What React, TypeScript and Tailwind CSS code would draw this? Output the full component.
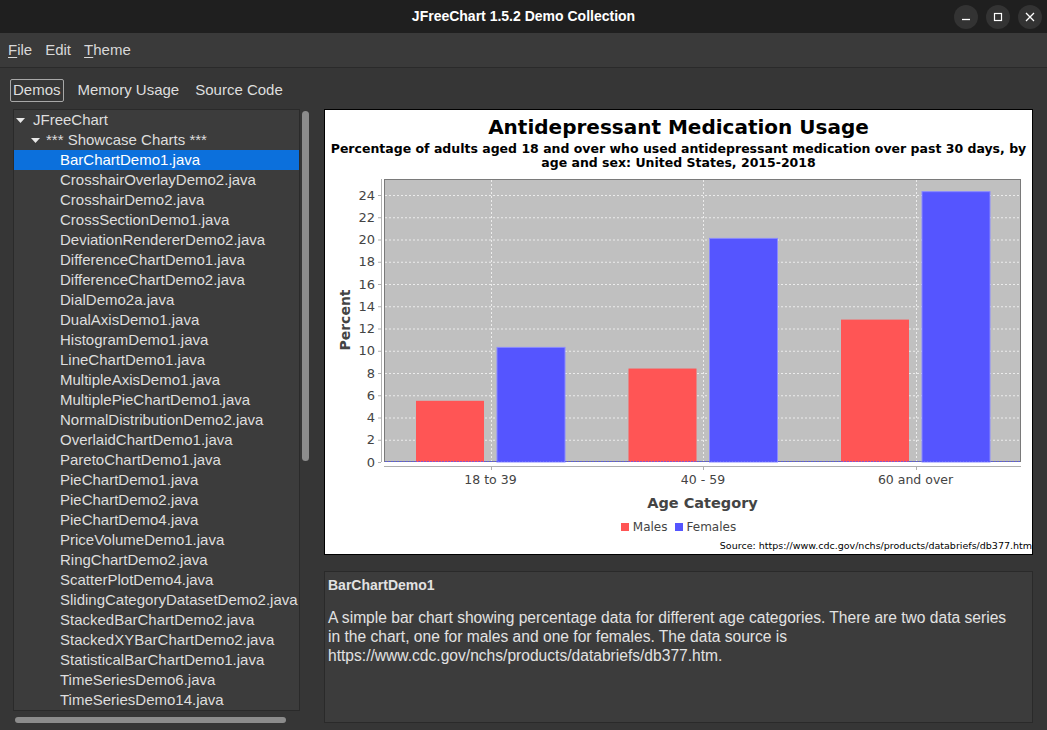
import React from 'react';

const demos = [
  'BarChartDemo1.java',
  'CrosshairOverlayDemo2.java',
  'CrosshairDemo2.java',
  'CrossSectionDemo1.java',
  'DeviationRendererDemo2.java',
  'DifferenceChartDemo1.java',
  'DifferenceChartDemo2.java',
  'DialDemo2a.java',
  'DualAxisDemo1.java',
  'HistogramDemo1.java',
  'LineChartDemo1.java',
  'MultipleAxisDemo1.java',
  'MultiplePieChartDemo1.java',
  'NormalDistributionDemo2.java',
  'OverlaidChartDemo1.java',
  'ParetoChartDemo1.java',
  'PieChartDemo1.java',
  'PieChartDemo2.java',
  'PieChartDemo4.java',
  'PriceVolumeDemo1.java',
  'RingChartDemo2.java',
  'ScatterPlotDemo4.java',
  'SlidingCategoryDatasetDemo2.java',
  'StackedBarChartDemo2.java',
  'StackedXYBarChartDemo2.java',
  'StatisticalBarChartDemo1.java',
  'TimeSeriesDemo6.java',
  'TimeSeriesDemo14.java',
];

const data = [
  { label: '18 to 39', c: 490.5, males: 5.5, females: 10.3 },
  { label: '40 - 59', c: 703, males: 8.4, females: 20.1 },
  { label: '60 and over', c: 915.5, males: 12.8, females: 24.3 },
];

const yOf = (v: number) => 463 - v * 11.125;
const ticks = [0, 2, 4, 6, 8, 10, 12, 14, 16, 18, 20, 22, 24];

function Caret() {
  return (
    <svg width="9" height="5" viewBox="0 0 9 5" className="shrink-0">
      <path d="M0 0 L9 0 L4.5 5 Z" fill="#e8e8e8" />
    </svg>
  );
}

// plot coordinates are page pixels, the viewBox maps them into place
function BarChart() {
  return (
    <svg
      width="707"
      height="345"
      viewBox="325 171 707 345"
      className="block"
      style={{ fontFamily: '"DejaVu Sans", sans-serif' }}
    >
      <rect x="384.5" y="180.5" width="636" height="282" fill="#c0c0c0" stroke="#7a7a7a" />
      {ticks.slice(1).map((t) => (
        <line key={t} x1="385" x2="1020" y1={yOf(t) + 0.5} y2={yOf(t) + 0.5} stroke="#ececec" strokeDasharray="2 2" />
      ))}
      {data.map((d) => (
        <line key={d.label} x1={Math.round(d.c) + 0.5} x2={Math.round(d.c) + 0.5} y1="181" y2="462" stroke="#ececec" strokeDasharray="2 2" />
      ))}
      {data.map((d) => (
        <g key={'b' + d.label}>
          <rect x={d.c - 74.5} y={yOf(d.males)} width="68" height={463 - yOf(d.males)} fill="#ff5555" />
          <rect x={d.c + 6.5} y={yOf(d.females)} width="68" height={463 - yOf(d.females)} fill="#5555ff" stroke="#8a8aff" strokeWidth="1" />
        </g>
      ))}
      <line x1="385" x2="1020" y1="462.5" y2="462.5" stroke="#5555ff" strokeDasharray="2 1" opacity="0.7" />

      {/* value axis */}
      <line x1="381.5" x2="381.5" y1="180" y2="463" stroke="#b0b0b0" />
      {ticks.map((t) => (
        <g key={'t' + t}>
          <line x1="378" x2="381" y1={yOf(t) + 0.5} y2={yOf(t) + 0.5} stroke="#b0b0b0" />
          <text x="375" y={yOf(t) + 4.5} textAnchor="end" fontSize="13" fill="#444">
            {t}
          </text>
        </g>
      ))}
      <text
        x="0"
        y="0"
        transform="translate(350 321) rotate(-90)"
        textAnchor="middle"
        fontSize="14"
        fontWeight="bold"
        fill="#444"
      >
        Percent
      </text>

      {/* category axis */}
      <line x1="384" x2="1021" y1="467.5" y2="467.5" stroke="#b0b0b0" />
      {data.map((d) => (
        <g key={'c' + d.label}>
          <line x1={Math.round(d.c) + 0.5} x2={Math.round(d.c) + 0.5} y1="467" y2="471" stroke="#b0b0b0" />
          <text x={d.c} y="484.5" textAnchor="middle" fontSize="12.5" fill="#444">
            {d.label}
          </text>
        </g>
      ))}
      <text x="702.5" y="509" textAnchor="middle" fontSize="14.5" fontWeight="bold" fill="#444">
        Age Category
      </text>
    </svg>
  );
}

export default function App() {
  return (
    <div className="w-[1047px] h-[730px] flex flex-col bg-[#363636] overflow-hidden font-['Liberation_Sans',sans-serif] text-[#dedede]">
      {/* window title bar */}
      <div className="h-[33px] shrink-0 bg-[#1f1f1f] grid grid-cols-[1fr_auto_1fr] items-center">
        <div />
        <div className="text-[14px] font-bold text-white">JFreeChart 1.5.2 Demo Collection</div>
        <div className="flex justify-end gap-[8px] pr-[5px]">
          <div className="w-[24px] h-[24px] rounded-full bg-[#333] flex items-center justify-center">
            <svg width="10" height="10" viewBox="0 0 10 10">
              <line x1="1" x2="9" y1="7.5" y2="7.5" stroke="#fff" strokeWidth="1.3" />
            </svg>
          </div>
          <div className="w-[24px] h-[24px] rounded-full bg-[#333] flex items-center justify-center">
            <svg width="10" height="10" viewBox="0 0 10 10">
              <rect x="1.5" y="1.5" width="7" height="7" fill="none" stroke="#fff" strokeWidth="1.2" />
            </svg>
          </div>
          <div className="w-[24px] h-[24px] rounded-full bg-[#333] flex items-center justify-center">
            <svg width="10" height="10" viewBox="0 0 10 10">
              <path d="M1 1 L9 9 M9 1 L1 9" stroke="#fff" strokeWidth="1.3" />
            </svg>
          </div>
        </div>
      </div>

      {/* menu bar */}
      <div className="h-[35px] shrink-0 bg-[#3a3a3a] border-b border-[#2a2a2a] flex items-center gap-[13px] px-[8px] text-[15px] text-[#d8d8d8]">
        <span>
          <span className="underline underline-offset-2">F</span>ile
        </span>
        <span>Edit</span>
        <span>
          <span className="underline underline-offset-2">T</span>heme
        </span>
      </div>

      {/* tabbed pane */}
      <div className="flex-1 flex flex-col pt-[11px]">
        <div className="h-[23px] flex items-center pl-[10px] text-[15px] text-[#dedede]">
          <div className="h-[23px] border border-[#a8a8a8] rounded-[2px] px-[2px] flex items-center">Demos</div>
          <div className="ml-[14px]">Memory Usage</div>
          <div className="ml-[16px]">Source Code</div>
        </div>

        <div className="flex pt-[7px] pl-[13px]">
          {/* left: demo tree */}
          <div className="flex flex-col w-[297px]">
            <div className="flex">
              <div className="w-[287px] h-[602px] border border-[#2a2a2a] bg-[#3c3c3c] overflow-hidden text-[15px] whitespace-nowrap">
                <div className="h-[20px] flex items-center pl-[2px]">
                  <Caret />
                  <span className="ml-[8px]">JFreeChart</span>
                </div>
                <div className="h-[20px] flex items-center pl-[17px]">
                  <Caret />
                  <span className="ml-[6px]">*** Showcase Charts ***</span>
                </div>
                {demos.map((d, i) => (
                  <div
                    key={d}
                    className={
                      i === 0
                        ? 'h-[20px] flex items-center pl-[46px] bg-[#0c70dc] text-white'
                        : 'h-[20px] flex items-center pl-[46px]'
                    }
                  >
                    {d}
                  </div>
                ))}
              </div>
              <div className="ml-[2px] w-[7px] pt-[2px]">
                <div className="w-[7px] h-[350px] rounded-full bg-[#8c8c8c]" />
              </div>
            </div>
            <div className="mt-[6px] ml-[2px] w-[271px] h-[6px] rounded-full bg-[#8c8c8c]" />
          </div>

          {/* right: chart + description */}
          <div className="ml-[14px] w-[709px] flex flex-col">
            <div className="h-[446px] bg-white border border-black flex flex-col items-center overflow-hidden font-['DejaVu_Sans',sans-serif] text-black">
              <div className="mt-[5px] h-[24px] leading-[24px] text-[20px] font-bold">
                Antidepressant Medication Usage
              </div>
              <div className="mt-[3px] text-[12.5px] leading-[14px] font-bold text-center whitespace-nowrap">
                Percentage of adults aged 18 and over who used antidepressant medication over past 30 days, by
                <br />
                age and sex: United States, 2015-2018
              </div>
              <BarChart />
              <div className="mt-[4px] h-[16px] flex items-center text-[12px] text-[#444]">
                <span className="w-[8px] h-[8px] bg-[#ff5555]" />
                <span className="ml-[4px]">Males</span>
                <span className="ml-[7px] w-[8px] h-[8px] bg-[#5555ff]" />
                <span className="ml-[4px]">Females</span>
              </div>
              <div className="mt-[5px] self-end h-[12px] leading-[12px] text-[9.5px] text-black whitespace-nowrap">
                Source: https://www.cdc.gov/nchs/products/databriefs/db377.htm
              </div>
            </div>

            <div className="mt-[16px] h-[152px] border border-[#2a2a2a] bg-[#3c3c3c] pl-[3px] pt-[4px] text-[#e2e2e2]">
              <div className="text-[14px] leading-[18px] font-bold">BarChartDemo1</div>
              <div className="mt-[14px] text-[15.6px] leading-[19px] whitespace-nowrap">
                A simple bar chart showing percentage data for different age categories. There are two data series
                <br />
                in the chart, one for males and one for females. The data source is
                <br />
                https://www.cdc.gov/nchs/products/databriefs/db377.htm.
              </div>
            </div>
          </div>
        </div>
      </div>
    </div>
  );
}
